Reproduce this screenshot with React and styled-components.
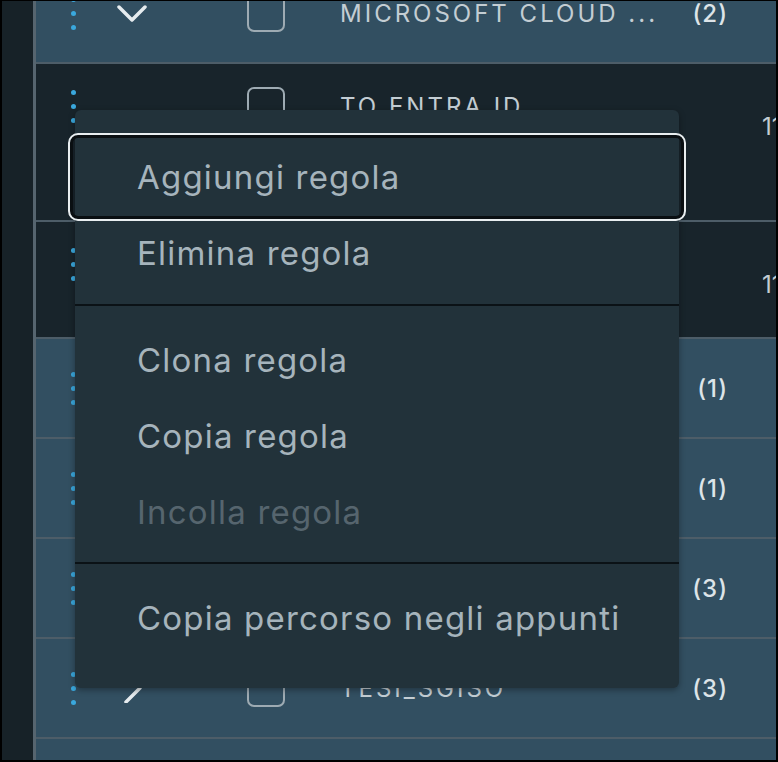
import styled, { createGlobalStyle, css } from "styled-components";

const GlobalStyle = createGlobalStyle`
  html, body {
    margin: 0;
    padding: 0;
    background: #000;
  }
  body {
    font-family: Inter, "Open Sans", sans-serif;
  }
`;

const Frame = styled.div`
  width: 778px;
  height: 762px;
  box-sizing: border-box;
  border: 2px solid #000;
  border-top-width: 1px;
  display: flex;
  overflow: hidden;
`;

const Sidebar = styled.div`
  width: 31px;
  flex-shrink: 0;
  background: #172228;
  border-right: 3px solid #56656f;
`;

const Main = styled.div`
  flex: 1;
  position: relative;
  background: #324f61;
`;

const Table = styled.div`
  margin-top: -37px;
  display: flex;
  flex-direction: column;
`;

const Row = styled.div`
  height: ${(p) => p.$h}px;
  box-sizing: border-box;
  border-bottom: 2px solid #4d5d68;
  display: grid;
  grid-template-columns: 60px 70px 174px 1fr 40px 48px;
  background: ${(p) => (p.$dark ? "#18242b" : "#324f61")};
  ${(p) =>
    p.$dark
      ? css`
          align-items: start;
          padding-top: 22px;
        `
      : css`
          align-items: center;
        `}
`;

const Cell = styled.div`
  height: 40px;
  display: flex;
  align-items: center;
  white-space: nowrap;
`;

const HandleCell = styled(Cell)`
  padding-left: 35px;
`;

const Dots = styled.div`
  display: flex;
  flex-direction: column;
  gap: 9px;
`;

const Dot = styled.span`
  width: 5px;
  height: 5px;
  border-radius: 50%;
  background: #3aa8dd;
`;

const ToggleCell = styled(Cell)`
  padding-left: 21px;
`;

const CheckCell = styled(Cell)`
  padding-left: 81px;
`;

const Checkbox = styled.span`
  width: 38px;
  height: 38px;
  box-sizing: border-box;
  border: 2px solid #9eabb3;
  border-radius: 7px;
`;

const NameCell = styled(Cell)`
  font-size: 24px;
  letter-spacing: 3px;
  color: #c3cdd3;
`;

const CountCell = styled(Cell)`
  justify-content: flex-end;
  font-size: 24px;
  font-weight: 500;
  letter-spacing: 1px;
  color: #dde4e8;
`;

const ExtraCell = styled(Cell)`
  padding-left: 34px;
  margin-top: 20px;
  font-size: 24px;
  color: #c3cdd3;
  overflow: hidden;
`;

const Menu = styled.div`
  position: absolute;
  left: 39px;
  top: 109px;
  width: 604px;
  box-sizing: border-box;
  padding: 29px 0 32px;
  background: #22323a;
  border-radius: 6px;
  box-shadow: 0 2px 6px rgba(0, 0, 0, 0.35);
`;

const MenuItem = styled.div`
  position: relative;
  height: 76px;
  display: flex;
  align-items: center;
  padding-left: 62px;
  font-size: 33px;
  letter-spacing: 1.2px;
  color: ${(p) => (p.$disabled ? "#56656e" : "#a6b4bc")};
  ${(p) =>
    p.$focused &&
    css`
      &::after {
        content: "";
        position: absolute;
        inset: -6px -7px;
        border: 2px solid #e9eef0;
        border-radius: 10px;
        box-shadow: inset 0 0 0 3px #0a0f12;
      }
    `}
`;

const MenuDivider = styled.div`
  height: 2px;
  background: #0b1216;
  margin: ${(p) => p.$m};
`;

function Chevron({ dir }) {
  if (dir === "down") {
    return (
      <svg width="30" height="18" viewBox="0 0 30 18">
        <polyline
          points="2,3 15,16 28,3"
          fill="none"
          stroke="#e6ecef"
          strokeWidth="3.5"
          strokeLinecap="round"
          strokeLinejoin="round"
        />
      </svg>
    );
  }
  return (
    <svg width="30" height="30" viewBox="0 0 30 30">
      <polyline
        points="9,1 23,15 9,29"
        fill="none"
        stroke="#e6ecef"
        strokeWidth="3.5"
        strokeLinecap="round"
        strokeLinejoin="round"
      />
    </svg>
  );
}

const rows = [
  { h: 100, toggle: "down", name: "MICROSOFT CLOUD ...", count: "(2)" },
  { h: 158, dark: true, name: "TO ENTRA ID", extra: "11" },
  { h: 117, dark: true, name: "", extra: "11" },
  { h: 100, toggle: "right", name: "", count: "(1)" },
  { h: 100, toggle: "right", name: "", count: "(1)" },
  { h: 100, toggle: "right", name: "", count: "(3)" },
  { h: 100, toggle: "right", name: "TESI_SGISO", count: "(3)" },
  { h: 100, toggle: "right", name: "", count: "" },
];

export default function App() {
  return (
    <>
      <GlobalStyle />
      <Frame>
        <Sidebar />
        <Main>
          <Table>
            {rows.map((r, i) => (
              <Row key={i} $h={r.h} $dark={r.dark}>
                <HandleCell>
                  <Dots>
                    <Dot />
                    <Dot />
                    <Dot />
                  </Dots>
                </HandleCell>
                <ToggleCell>{r.toggle && <Chevron dir={r.toggle} />}</ToggleCell>
                <CheckCell>
                  <Checkbox />
                </CheckCell>
                <NameCell>{r.name}</NameCell>
                <CountCell>{r.count}</CountCell>
                {r.extra ? <ExtraCell>{r.extra}</ExtraCell> : <Cell />}
              </Row>
            ))}
          </Table>
          <Menu>
            <MenuItem $focused>Aggiungi regola</MenuItem>
            <MenuItem>Elimina regola</MenuItem>
            <MenuDivider $m="13px 0 16px" />
            <MenuItem>Clona regola</MenuItem>
            <MenuItem>Copia regola</MenuItem>
            <MenuItem $disabled>Incolla regola</MenuItem>
            <MenuDivider $m="12px 0 16px" />
            <MenuItem>Copia percorso negli appunti</MenuItem>
          </Menu>
        </Main>
      </Frame>
    </>
  );
}
